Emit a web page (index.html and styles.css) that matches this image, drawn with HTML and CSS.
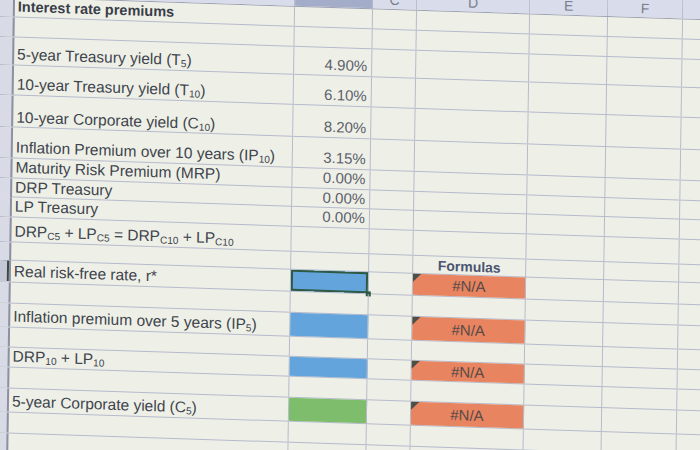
FILE: index.html
```html
<!DOCTYPE html>
<html>
<head>
<meta charset="utf-8">
<link rel="stylesheet" href="styles.css">
</head>
<body>
<div class="sheet">
  <div class="row hdr h20"><div class="rh"></div><div></div><div class="sel"></div><div>C</div><div>D</div><div>E</div><div>F</div><div>G</div></div>
  <div class="row h20"><div class="rh"></div><div class="lab title"><span>Interest rate premiums</span></div><div></div><div></div><div></div><div></div><div></div><div></div></div>
  <div class="row h20"><div class="rh"></div><div></div><div></div><div></div><div></div><div></div><div></div><div></div></div>
  <div class="row h28"><div class="rh"></div><div class="lab"><span>5-year Treasury yield (T<sub>5</sub>)</span></div><div class="val">4.90%</div><div></div><div></div><div></div><div></div><div></div></div>
  <div class="row h30"><div class="rh"></div><div class="lab"><span>10-year Treasury yield (T<sub>10</sub>)</span></div><div class="val">6.10%</div><div></div><div></div><div></div><div></div><div></div></div>
  <div class="row h32"><div class="rh"></div><div class="lab low"><span>10-year Corporate yield (C<sub>10</sub>)</span></div><div class="val">8.20%</div><div></div><div></div><div></div><div></div><div></div></div>
  <div class="row h31"><div class="rh"></div><div class="lab"><span>Inflation Premium over 10 years (IP<sub>10</sub>)</span></div><div class="val">3.15%</div><div></div><div></div><div></div><div></div><div></div></div>
  <div class="row h20"><div class="rh"></div><div class="lab"><span>Maturity Risk Premium (MRP)</span></div><div class="val">0.00%</div><div></div><div></div><div></div><div></div><div></div></div>
  <div class="row h19"><div class="rh"></div><div class="lab"><span>DRP Treasury</span></div><div class="val">0.00%</div><div></div><div></div><div></div><div></div><div></div></div>
  <div class="row h20"><div class="rh"></div><div class="lab"><span>LP Treasury</span></div><div class="val">0.00%</div><div></div><div></div><div></div><div></div><div></div></div>
  <div class="row h25"><div class="rh"></div><div class="lab"><span>DRP<sub>C5</sub> + LP<sub>C5</sub> = DRP<sub>C10</sub> + LP<sub>C10</sub></span></div><div></div><div></div><div></div><div></div><div></div><div></div></div>
  <div class="row h18"><div class="rh"></div><div></div><div></div><div></div><div class="fx">Formulas</div><div></div><div></div><div></div></div>
  <div class="row h22"><div class="rh on"></div><div class="lab"><span>Real risk-free rate, r*</span></div><div class="blue cur"></div><div></div><div class="err">#N/A</div><div></div><div></div><div></div></div>
  <div class="row h21"><div class="rh"></div><div></div><div></div><div></div><div></div><div></div><div></div><div></div></div>
  <div class="row h24"><div class="rh"></div><div class="lab"><span>Inflation premium over 5 years (IP<sub>5</sub>)</span></div><div class="blue"></div><div></div><div class="err">#N/A</div><div></div><div></div><div></div></div>
  <div class="row h20"><div class="rh"></div><div></div><div></div><div></div><div></div><div></div><div></div><div></div></div>
  <div class="row h20"><div class="rh"></div><div class="lab"><span>DRP<sub>10</sub> + LP<sub>10</sub></span></div><div class="blue"></div><div></div><div class="err">#N/A</div><div></div><div></div><div></div></div>
  <div class="row h21"><div class="rh"></div><div></div><div></div><div></div><div></div><div></div><div></div><div></div></div>
  <div class="row h24"><div class="rh"></div><div class="lab"><span>5-year Corporate yield (C<sub>5</sub>)</span></div><div class="green"></div><div></div><div class="err">#N/A</div><div></div><div></div><div></div></div>
  <div class="row h21"><div class="rh"></div><div></div><div></div><div></div><div></div><div></div><div></div><div></div></div>
  <div class="row h22"><div class="rh"></div><div></div><div></div><div></div><div></div><div></div><div></div><div></div></div>
  <div class="row h22"><div class="rh"></div><div></div><div></div><div></div><div></div><div></div><div></div><div></div></div>
</div>
</body>
</html>
```
FILE: styles.css
```css
html, body {
  margin: 0;
  height: 100%;
  overflow: hidden;
  background: #d9dcea;
}
body {
  font-family: "Liberation Sans", Arial, sans-serif;
}
.sheet {
  margin: -23px 0 0 -30px;
  width: 793px;
  background: #eef0e8;
  transform-origin: 30px 23px;
  transform: matrix(1, 0.033, -0.015, 1, 0, 0);
}
.row {
  display: grid;
  grid-template-columns: 45px 280px 78px 44px 113px 78px 75px 80px;
  border-bottom: 1px solid #b6bacb;
  box-sizing: border-box;
}
.row > div {
  border-right: 1px solid #b6bacb;
  display: flex;
  align-items: flex-end;
  min-width: 0;
  white-space: nowrap;
  box-sizing: border-box;
  position: relative;
}
.h18 { height: 18px; }
.h19 { height: 19px; }
.h20 { height: 20px; }
.h21 { height: 21px; }
.h22 { height: 22px; }
.h24 { height: 24px; }
.h25 { height: 25px; }
.h28 { height: 28px; }
.h30 { height: 30px; }
.h31 { height: 31px; }
.h32 { height: 32px; }

.row > .rh {
  background: #d8dbe6;
  border-right: 2px solid #8c90a0;
}
.row > .rh.on {
  background: #c4c8d7;
  box-shadow: inset -2px 0 0 #3b4842;
}
.hdr {
  border-bottom-color: #9ca1b3;
}
.hdr > div {
  background: #d9dcea;
  justify-content: center;
  align-items: center;
  color: #7b7e8c;
  font-size: 14px;
}
.hdr > .sel {
  background: #a3acc8;
}
.lab {
  padding: 0 0 1px 3px;
  font-size: 15.5px;
  line-height: 18px;
  color: #40444c;
}
.lab.low {
  padding-bottom: 0;
}
.title {
  font-weight: bold;
  font-size: 14.5px;
  color: #3a3e48;
}
sub {
  font-size: 0.65em;
  vertical-align: -0.2em;
  line-height: 0;
}
.val {
  justify-content: flex-end;
  padding: 0 4px 1px 0;
  font-size: 15px;
  line-height: 18px;
  color: #5d616b;
}
.fx {
  justify-content: center;
  font-weight: bold;
  font-size: 14px;
  line-height: 18px;
  color: #4b5470;
}
.row > .err {
  background: #e8845f;
  justify-content: center;
  align-items: center;
  font-size: 15px;
  color: #574a48;
}
.err::before {
  content: "";
  position: absolute;
  top: 0;
  left: 0;
  border-top: 8px solid #4a5048;
  border-right: 8px solid transparent;
}
.row > .blue { background: #64a4dc; }
.row > .green { background: #7dbd6b; }
.row > .cur {
  box-shadow: inset 0 0 0 2px #2e5a44;
}
.cur::after {
  content: "";
  position: absolute;
  right: -3px;
  bottom: -3px;
  width: 5px;
  height: 5px;
  background: #2e5a44;
}
```
